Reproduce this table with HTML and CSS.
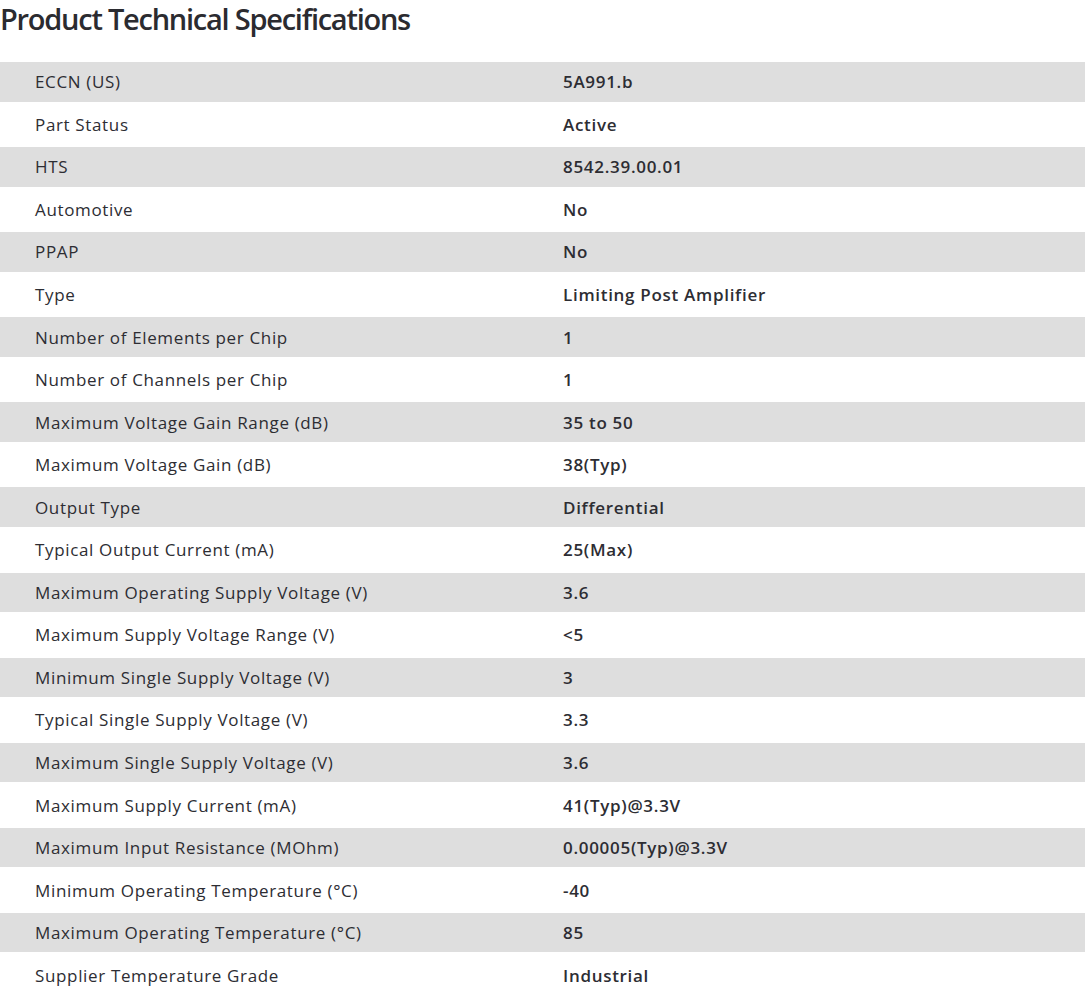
FILE: index.html
```html
<!DOCTYPE html>
<html lang="en">
<head>
<meta charset="utf-8">
<title>Product Technical Specifications</title>
<link rel="stylesheet" href="styles.css">
</head>
<body>
<h2 class="title">Product Technical Specifications</h2>
<div class="specs">
  <div class="row"><div class="label">ECCN (US)</div><div class="value">5A991.b</div></div>
  <div class="row"><div class="label">Part Status</div><div class="value">Active</div></div>
  <div class="row"><div class="label">HTS</div><div class="value">8542.39.00.01</div></div>
  <div class="row"><div class="label">Automotive</div><div class="value">No</div></div>
  <div class="row"><div class="label">PPAP</div><div class="value">No</div></div>
  <div class="row"><div class="label">Type</div><div class="value">Limiting Post Amplifier</div></div>
  <div class="row"><div class="label">Number of Elements per Chip</div><div class="value">1</div></div>
  <div class="row"><div class="label">Number of Channels per Chip</div><div class="value">1</div></div>
  <div class="row"><div class="label">Maximum Voltage Gain Range (dB)</div><div class="value">35 to 50</div></div>
  <div class="row"><div class="label">Maximum Voltage Gain (dB)</div><div class="value">38(Typ)</div></div>
  <div class="row"><div class="label">Output Type</div><div class="value">Differential</div></div>
  <div class="row"><div class="label">Typical Output Current (mA)</div><div class="value">25(Max)</div></div>
  <div class="row"><div class="label">Maximum Operating Supply Voltage (V)</div><div class="value">3.6</div></div>
  <div class="row"><div class="label">Maximum Supply Voltage Range (V)</div><div class="value">&lt;5</div></div>
  <div class="row"><div class="label">Minimum Single Supply Voltage (V)</div><div class="value">3</div></div>
  <div class="row"><div class="label">Typical Single Supply Voltage (V)</div><div class="value">3.3</div></div>
  <div class="row"><div class="label">Maximum Single Supply Voltage (V)</div><div class="value">3.6</div></div>
  <div class="row"><div class="label">Maximum Supply Current (mA)</div><div class="value">41(Typ)@3.3V</div></div>
  <div class="row"><div class="label">Maximum Input Resistance (MOhm)</div><div class="value">0.00005(Typ)@3.3V</div></div>
  <div class="row"><div class="label">Minimum Operating Temperature (°C)</div><div class="value">-40</div></div>
  <div class="row"><div class="label">Maximum Operating Temperature (°C)</div><div class="value">85</div></div>
  <div class="row"><div class="label">Supplier Temperature Grade</div><div class="value">Industrial</div></div>
</div>
</body>
</html>
```
FILE: styles.css
```css
html, body {
  margin: 0;
  padding: 0;
  background: #ffffff;
}
body {
  font-family: "Open Sans", "Noto Sans", sans-serif;
  color: #2d2d33;
}
.title {
  margin: 0;
  padding: 0;
  height: 62px;
  box-sizing: border-box;
  padding-top: 1px;
  font-size: 29px;
  line-height: 36px;
  font-weight: 600;
  letter-spacing: -1.25px;
  color: #2b2b30;
}
.specs {
  display: flex;
  flex-direction: column;
}
.row {
  display: flex;
  align-items: center;
  height: 45.6px;
  font-size: 17px;
}
.row:nth-child(odd) {
  background: #dedede;
  height: 39.5px;
}
.label {
  width: 563px;
  box-sizing: border-box;
  padding-left: 35px;
  letter-spacing: 0.65px;
}
.value {
  font-weight: 600;
  letter-spacing: 0.7px;
}
```
